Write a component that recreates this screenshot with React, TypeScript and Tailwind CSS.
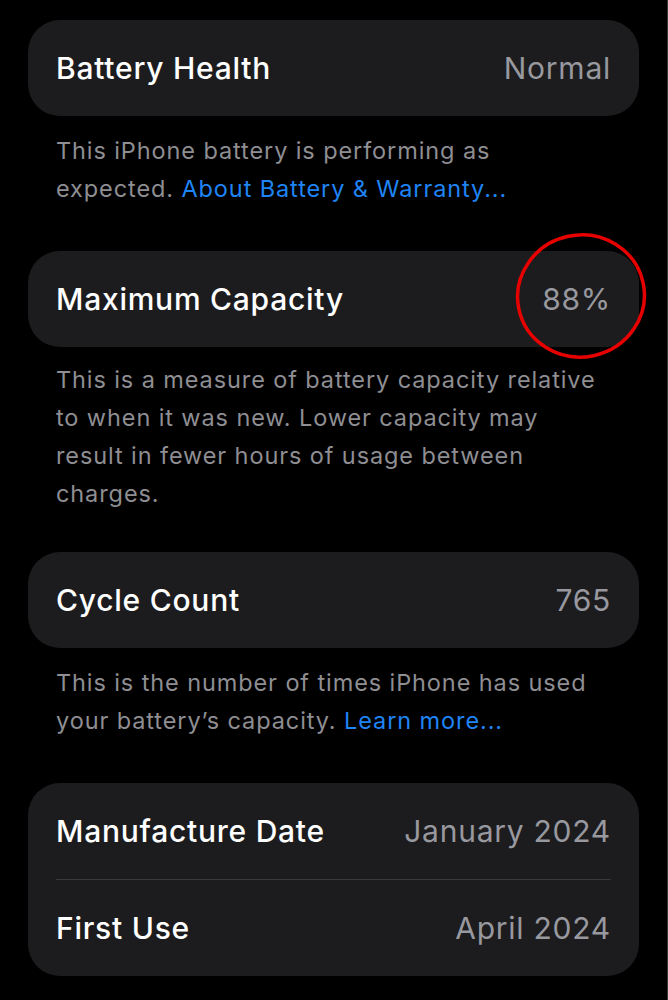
import React from "react";

const font = { fontFamily: "Inter, 'Noto Sans', 'Liberation Sans', sans-serif" };

function Row({ label, value }: { label: string; value: string }) {
  return (
    <div className="flex h-[96px] items-center justify-between px-[28px]">
      <span className="whitespace-nowrap text-[30px] font-medium tracking-[0.75px] text-white">{label}</span>
      <span className="whitespace-nowrap text-[30px] tracking-[0.75px] text-[#98989f]">{value}</span>
    </div>
  );
}

function Desc({ children, className }: { children: React.ReactNode; className?: string }) {
  return (
    <p
      className={
        "whitespace-nowrap px-[28px] text-[23.5px] leading-[38px] tracking-[0.9px] text-[#8e8e93] " +
        (className ?? "")
      }
    >
      {children}
    </p>
  );
}

export default function App() {
  return (
    <div className="min-h-[1000px] w-[668px] border-r border-[#3a3a3a] bg-black" style={font}>
      <div className="px-[28px] pt-[20px]">
        <div className="rounded-[32px] bg-[#1c1c1e]">
          <Row label="Battery Health" value="Normal" />
        </div>
        <Desc className="mt-[16px]">
          This iPhone battery is performing as
          <br />
          expected. <span className="text-[#1f84f5]">About Battery &amp; Warranty...</span>
        </Desc>

        <div className="relative mt-[43px] rounded-[32px] bg-[#1c1c1e]">
          <Row label="Maximum Capacity" value="88%" />
          <svg
            className="absolute right-[-9px] top-[-19px]"
            width="134"
            height="128"
            viewBox="0 0 134 128"
          >
            <ellipse
              cx="67"
              cy="64"
              rx="63.5"
              ry="61"
              transform="rotate(-12 67 64)"
              fill="none"
              stroke="#e60000"
              strokeWidth="3.5"
            />
          </svg>
        </div>
        <Desc className="mt-[14px]">
          This is a measure of battery capacity relative
          <br />
          to when it was new. Lower capacity may
          <br />
          result in fewer hours of usage between
          <br />
          charges.
        </Desc>

        <div className="mt-[39px] rounded-[32px] bg-[#1c1c1e]">
          <Row label="Cycle Count" value="765" />
        </div>
        <Desc className="mt-[16px]">
          This is the number of times iPhone has used
          <br />
          your battery’s capacity. <span className="text-[#1f84f5]">Learn more...</span>
        </Desc>

        <div className="mt-[43px] rounded-[32px] bg-[#1c1c1e]">
          <Row label="Manufacture Date" value="January 2024" />
          <div className="mx-[28px] h-px bg-[#3a3a3c]" />
          <Row label="First Use" value="April 2024" />
        </div>
      </div>
    </div>
  );
}
